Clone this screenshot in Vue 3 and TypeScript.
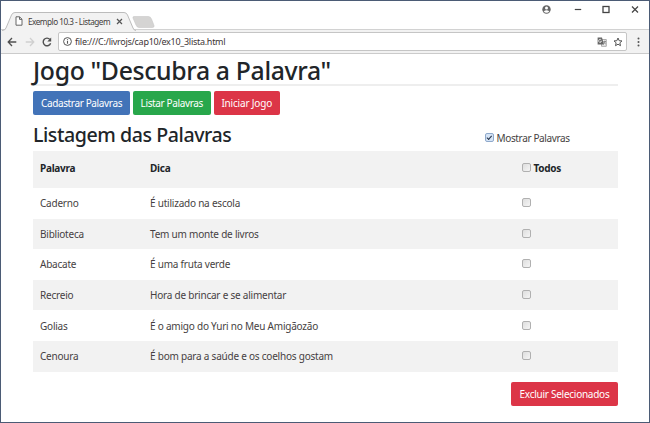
<script setup lang="ts">
import { ref } from 'vue'

interface Entry { word: string; hint: string; selected: boolean }

const entries = ref<Entry[]>([
  { word: 'Caderno', hint: 'É utilizado na escola', selected: false },
  { word: 'Biblioteca', hint: 'Tem um monte de livros', selected: false },
  { word: 'Abacate', hint: 'É uma fruta verde', selected: false },
  { word: 'Recreio', hint: 'Hora de brincar e se alimentar', selected: false },
  { word: 'Golias', hint: 'É o amigo do Yuri no Meu Amigãozão', selected: false },
  { word: 'Cenoura', hint: 'É bom para a saúde e os coelhos gostam', selected: false },
])
const showWords = ref(true)
const all = ref(false)
function toggleAll() {
  entries.value.forEach((e) => { e.selected = all.value })
}
</script>

<template>
  <div class="window">
    <header class="titlebar">
      <div class="tab">
        <svg class="tab-shape" width="134" height="20" viewBox="0 0 134 20">
          <path d="M0 19 Q3 19 4 16.500L9.500 3Q10.500 .5 13 .5H122Q124.500 .5 125.500 3L131 16Q132 19 134 19V20H0Z" fill="#f2f2f2" />
          <path d="M0 18.500Q3 18.500 4 16L9.500 3Q10.500 .5 13 .5H122Q124.500 .5 125.500 3L131 16Q132 18.500 134 18.500" fill="none" stroke="#bcbcbc" />
        </svg>
        <div class="tab-content">
          <svg width="8" height="10" viewBox="0 0 8 10"><path d="M1 .8H4.600L7 3.200V9.200H1ZM4.500 1V3.400H7" fill="#fff" stroke="#666" /></svg>
          <span class="tab-title">Exemplo 10.3 - Listagem</span>
          <svg width="7" height="7" viewBox="0 0 7 7"><path d="M1 1L6 6M6 1L1 6" stroke="#555" stroke-width="1.200" /></svg>
        </div>
      </div>
      <svg class="new-tab" width="24" height="13" viewBox="0 0 24 13"><path d="M2 .5H16.500Q18.500 .5 19.500 3L22 9.500Q22.500 11.500 20.500 11.500H7Q5 11.500 4 9L1 2Q.5 .5 2 .5Z" fill="#d5d4d3" stroke="#c8c8c8" stroke-width=".6" /></svg>
      <div class="controls">
        <svg width="9" height="9" viewBox="0 0 9 9"><circle cx="4.500" cy="4.500" r="4.200" fill="#666" /><circle cx="4.500" cy="3.100" r="1.500" fill="#fff" /><path d="M1.700 6.300Q4.500 4.200 7.300 6.300Q6.200 7.800 4.500 7.800T1.700 6.300Z" fill="#fff" /></svg>
        <svg width="8" height="9" viewBox="0 0 8 9"><path d="M.8 4.500H7.200" stroke="#444" stroke-width="1.200" /></svg>
        <svg width="8" height="9" viewBox="0 0 8 9"><rect x="1" y="1.500" width="6" height="6" fill="none" stroke="#444" stroke-width="1.300" /></svg>
        <svg width="8" height="9" viewBox="0 0 8 9"><path d="M1 1.500L7 7.500M7 1.500L1 7.500" stroke="#444" stroke-width="1.200" /></svg>
      </div>
    </header>
    <div class="toolbar">
      <svg class="nav" width="10" height="10" viewBox="0 0 10 10"><path d="M9.300 5H1.500M5 1L1.200 5L5 9" fill="none" stroke="#505050" stroke-width="1.300" /></svg>
      <svg class="nav" width="10" height="10" viewBox="0 0 10 10"><path d="M.7 5H8.500M5 1L8.800 5L5 9" fill="none" stroke="#d0d0d0" stroke-width="1.300" /></svg>
      <svg class="nav" width="10" height="10" viewBox="0 0 10 10"><path d="M8.600 6.200A3.800 3.800 0 1 1 7.900 2.500" fill="none" stroke="#505050" stroke-width="1.400" /><path d="M9.200 .6V4.500H5.300Z" fill="#505050" /></svg>
      <div class="address">
        <svg width="9" height="9" viewBox="0 0 9 9"><circle cx="4.500" cy="4.500" r="3.900" fill="none" stroke="#555" /><path d="M4.500 4V6.800M4.500 2.200V3.200" stroke="#555" stroke-width="1.100" /></svg>
        <span class="url">file:///C:/livrojs/cap10/ex10_3lista.html</span>
        <svg width="10" height="10" viewBox="0 0 10 10"><path d="M4.500 2.500H9.300V9.300H4.500Z" fill="#eee" stroke="#999" stroke-width=".8" /><path d="M.6 .6H5L7 7.500H.6Z" fill="#666" /><path d="M4.300 3A1.500 1.500 0 1 0 4.500 4.400H3.200" fill="none" stroke="#eee" stroke-width=".8" /><path d="M6.300 4.500H9M7.600 3.700V4.500M8.500 4.500Q8 6 6.500 7M6.700 5Q7.500 6.500 8.800 7" fill="none" stroke="#777" stroke-width=".7" /></svg>
        <svg class="star" width="10" height="10" viewBox="0 0 10 10"><path d="M5 1L6.150 3.700L9 3.950L6.850 5.800L7.500 8.700L5 7.200L2.500 8.700L3.150 5.800L1 3.950L3.850 3.700Z" fill="none" stroke="#555" stroke-width="1" /></svg>
      </div>
      <svg class="menu" width="3" height="10" viewBox="0 0 3 10"><g fill="#555"><circle cx="1.500" cy="1.500" r="1" /><circle cx="1.500" cy="5" r="1" /><circle cx="1.500" cy="8.500" r="1" /></g></svg>
    </div>

    <main class="page">
      <h1>Jogo "Descubra a Palavra"</h1>
      <nav class="buttons">
        <button class="btn primary">Cadastrar Palavras</button>
        <button class="btn success">Listar Palavras</button>
        <button class="btn danger start">Iniciar Jogo</button>
      </nav>
      <div class="heading">
        <h2>Listagem das Palavras</h2>
        <label class="show"><input v-model="showWords" type="checkbox" />Mostrar Palavras</label>
      </div>
      <div class="table">
        <div class="row head">
          <span>Palavra</span><span>Dica</span>
          <label><input v-model="all" type="checkbox" @change="toggleAll" />Todos</label>
        </div>
        <div v-for="entry in entries" :key="entry.word" class="row">
          <span>{{ entry.word }}</span>
          <span>{{ entry.hint }}</span>
          <label><input v-model="entry.selected" type="checkbox" /></label>
        </div>
      </div>
      <button class="btn danger remove">Excluir Selecionados</button>
    </main>
  </div>
</template>

<style>
body { margin: 0; background: #fff; }
</style>

<style scoped>
* { box-sizing: border-box; }
.window {
  width: 650px; height: 423px; border: 1px solid #4b5b75; background: #fff;
  font-family: "Noto Sans", "Open Sans", sans-serif; font-size: 10px; color: #463f42;
  overflow: hidden; white-space: nowrap;
}
svg { display: block; flex: none; }
.titlebar { height: 29px; display: flex; align-items: flex-start; border-bottom: 1px solid #d2d2d2; }
.tab { display: grid; width: 134px; height: 19px; margin: 11px 0 0 1px; }
.tab-shape, .tab-content { grid-area: 1 / 1; }
.tab-content { display: flex; align-items: center; height: 18px; padding-left: 13px; z-index: 1; }
.tab-title { font-size: 8.2px; width: 82px; margin: 0 6px 0 5px; letter-spacing: -0.5px; color: #443e3d; }
.new-tab { margin: 15px 0 0 -4px; }
.controls { margin-left: auto; display: flex; padding: 4px 10px 0 0; gap: 20.7px; }
.controls svg:first-child { margin-right: 1.5px; }
.toolbar { height: 24px; background: #f2f2f2; border-bottom: 1px solid #cbcbcb; display: flex; align-items: center; padding-left: 6px; }
.nav { margin-right: 8px; }
.nav:nth-child(3) { margin-left: -1px; margin-right: 6px; }
.address { width: 569px; height: 19px; border: 1px solid #c5c5c5; border-radius: 2px; background: #fff; display: flex; align-items: center; padding: 0 3px 0 4px; }
.url { font-size: 9px; margin: 0 auto 0 3px; letter-spacing: -0.28px; color: #3d3536; }
.star { margin-left: 6px; }
.menu { margin-left: 10px; }
.page { padding: 0 31px 0 32px; display: flex; flex-direction: column; }
h1, h2 { margin: 0; font-weight: 500; color: #212529; }
h1 { height: 32px; line-height: 32px; font-size: 24.8px; letter-spacing: -0.35px; border-bottom: 2px solid #eee; }
.buttons { display: flex; gap: 2.5px; margin-top: 5px; }
.btn { height: 24px; padding: 0; border: 0; border-radius: 2px; color: #fff; font: 10px/24px "Noto Sans", "Open Sans", sans-serif; letter-spacing: -0.36px; }
.primary { width: 97px; background: #4273b8; }
.success { width: 78.5px; background: #28a74b; }
.danger { background: #dc3547; }
.start { width: 66.5px; letter-spacing: -0.18px; }
.heading { height: 36px; display: flex; align-items: flex-start; }
h2 { width: 452px; font-size: 19.6px; line-height: 39px; letter-spacing: -0.44px; }
label { display: flex; align-items: center; }
.show { height: 16px; margin-top: 15px; letter-spacing: -0.36px; }
input { appearance: none; width: 9px; height: 9px; margin: 0 2.5px 0 0; border: 1px solid #b0b0b0; border-radius: 2px; background: linear-gradient(135deg, #dedede, #f5f5f5); display: grid; place-items: center; }
input:checked { border-color: #8fa9cb; background: #d5e4f6; }
input:checked::before { content: ""; width: 1.5px; height: 3.5px; border: solid #28344a; border-width: 0 1.5px 1.5px 0; transform: translateY(-0.5px) rotate(42deg); box-sizing: content-box; }
.show input, .row input { margin-bottom: 1px; }
.row { height: 30.6px; display: grid; grid-template-columns: 110px 372px 1fr; padding-left: 7px; align-items: center; letter-spacing: -0.22px; }
.row:nth-child(odd) { background: #f2f2f2; }
.head { height: 37px; padding-bottom: 4px; font-weight: 700; color: #212529; letter-spacing: -0.28px; }
.remove { width: 107px; align-self: flex-end; margin-top: 10px; letter-spacing: -0.26px; }
</style>
